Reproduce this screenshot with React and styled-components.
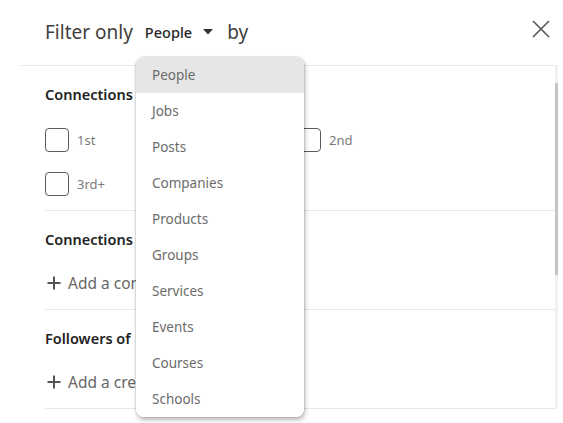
import React from "react"
import styled, { createGlobalStyle } from "styled-components"

const GlobalStyle = createGlobalStyle`
  body {
    margin: 0;
    background: #ffffff;
    font-family: "Noto Sans", "Liberation Sans", sans-serif;
  }
`

const Modal = styled.div`
  position: relative;
  width: 563px;
  height: 423px;
  overflow: hidden;
  background: #ffffff;
`

const Header = styled.header`
  display: flex;
  align-items: center;
  height: 66px;
  margin: 0 6px 0 20px;
  padding: 0 4px 0 25px;
  border-bottom: 1px solid #e8e8e8;
  box-sizing: border-box;
`

const Title = styled.span`
  font-size: 19px;
  color: #404040;
  padding-bottom: 2px;
`

const Picker = styled.button`
  display: flex;
  align-items: center;
  gap: 11px;
  margin: 0 14px 0 12px;
  padding: 0 0 2px;
  border: none;
  background: none;
  font-family: inherit;
  font-size: 14.5px;
  font-weight: 500;
  color: #262626;
`

const CloseButton = styled.button`
  margin-left: auto;
  width: 24px;
  height: 24px;
  padding: 0;
  border: none;
  background: none;
  display: flex;
  align-items: center;
  justify-content: center;
  margin-bottom: 8px;
`

const Body = styled.div`
  display: flex;
  margin-left: 20px;
  width: 538px;
`

const Content = styled.div`
  flex: 1;
  padding-left: 25px;
`

const Scrollbar = styled.div`
  width: 3px;
  background: #f1f1f1;
  padding-top: 17px;
`

const Thumb = styled.div`
  height: 192px;
  background: #c4c4c4;
`

const Section = styled.section`
  display: flex;
  flex-direction: column;
  gap: ${(p) => p.$gap}px;
  padding: 18px 0 14px;
  border-bottom: 1px solid #e8e8e8;
`

const SectionTitle = styled.h3`
  margin: 0;
  font-size: 14.5px;
  line-height: 20px;
  font-weight: 600;
  color: #222222;
`

const CheckGrid = styled.div`
  display: grid;
  grid-template-columns: 252px 1fr;
  row-gap: 20px;
`

const CheckItem = styled.label`
  display: flex;
  align-items: center;
  gap: 8px;
  font-size: 13px;
  color: #7a7a7a;
`

const Box = styled.span`
  width: 24px;
  height: 24px;
  box-sizing: border-box;
  border: 1px solid #5c5c5c;
  border-radius: 4px;
`

const AddRow = styled.div`
  display: flex;
  align-items: center;
  gap: 7px;
  height: 24px;
  padding-left: 2px;
  font-size: 15.5px;
  color: #666666;
`

const Menu = styled.ul`
  position: absolute;
  left: 136px;
  top: 57px;
  width: 168px;
  margin: 0;
  padding: 0;
  list-style: none;
  background: #ffffff;
  border-radius: 8px;
  overflow: hidden;
  box-shadow: 0 0 0 1px rgba(0, 0, 0, 0.08), 1px 3px 5px rgba(0, 0, 0, 0.28);
`

const MenuItem = styled.li`
  height: 36px;
  display: flex;
  align-items: center;
  padding-left: 16px;
  font-size: 13.5px;
  color: #6b6b6b;
  background: ${(p) => (p.$active ? "#e6e6e6" : "#ffffff")};
`

const options = [
  "People",
  "Jobs",
  "Posts",
  "Companies",
  "Products",
  "Groups",
  "Services",
  "Events",
  "Courses",
  "Schools",
]

const Plus = () => (
  <svg width="14" height="14" viewBox="0 0 14 14">
    <path d="M7 0.5v13M0.5 7h13" stroke="#555" strokeWidth="2" />
  </svg>
)

export default function App() {
  return (
    <>
      <GlobalStyle />
      <Modal>
        <Header>
          <Title>Filter only</Title>
          <Picker>
            People
            <svg width="10" height="6" viewBox="0 0 10 6">
              <path d="M0 0h10L5 5.5z" fill="#333" />
            </svg>
          </Picker>
          <Title>by</Title>
          <CloseButton aria-label="Close">
            <svg width="18" height="18" viewBox="0 0 18 18">
              <path
                d="M1 1l16 16M17 1L1 17"
                stroke="#555"
                strokeWidth="1.6"
              />
            </svg>
          </CloseButton>
        </Header>
        <Body>
          <Content>
            <Section $gap={24}>
              <SectionTitle>Connections</SectionTitle>
              <CheckGrid>
                <CheckItem>
                  <Box />
                  1st
                </CheckItem>
                <CheckItem>
                  <Box />
                  2nd
                </CheckItem>
                <CheckItem>
                  <Box />
                  3rd+
                </CheckItem>
              </CheckGrid>
            </Section>
            <Section $gap={22}>
              <SectionTitle>Connections of</SectionTitle>
              <AddRow>
                <Plus />
                Add a connection
              </AddRow>
            </Section>
            <Section $gap={22}>
              <SectionTitle>Followers of</SectionTitle>
              <AddRow>
                <Plus />
                Add a creator
              </AddRow>
            </Section>
          </Content>
          <Scrollbar>
            <Thumb />
          </Scrollbar>
        </Body>
        <Menu>
          {options.map((o, i) => (
            <MenuItem key={o} $active={i === 0}>
              {o}
            </MenuItem>
          ))}
        </Menu>
      </Modal>
    </>
  )
}
